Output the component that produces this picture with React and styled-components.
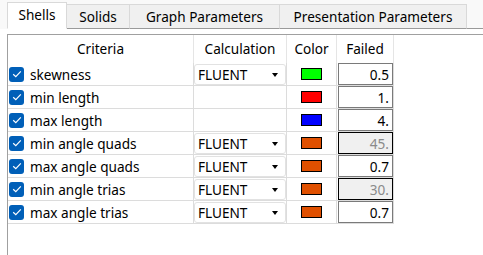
import React from 'react';
import styled, { createGlobalStyle } from 'styled-components';

const GlobalStyle = createGlobalStyle`
  html, body {
    margin: 0;
    padding: 0;
    background: #ffffff;
  }
  body {
    font-family: "Noto Sans", "Liberation Sans", sans-serif;
    font-size: 13.6px;
    color: #000;
  }
`;

const rows = [
  { label: 'skewness', calc: true, color: '#00ff00', value: '0.5' },
  { label: 'min length', calc: false, color: '#ff0000', value: '1.' },
  { label: 'max length', calc: false, color: '#0000ff', value: '4.' },
  { label: 'min angle quads', calc: true, color: '#e05000', value: '45.', disabled: true },
  { label: 'max angle quads', calc: true, color: '#e05000', value: '0.7' },
  { label: 'min angle trias', calc: true, color: '#e05000', value: '30.', disabled: true },
  { label: 'max angle trias', calc: true, color: '#e05000', value: '0.7' },
];

const tabs = [
  { name: 'Shells', width: 60 },
  { name: 'Solids', width: 64 },
  { name: 'Graph Parameters', width: 151 },
  { name: 'Presentation Parameters', width: 188 },
];

const App = () => {
  return (
    <Window>
      <GlobalStyle />
      <TabBar>
        {tabs.map((t, i) => (
          <Tab key={t.name} active={i === 0} width={t.width}>{t.name}</Tab>
        ))}
        <TabFill />
      </TabBar>
      <Pane>
        <Table>
          <HeadCell>Criteria</HeadCell>
          <HeadCell>Calculation</HeadCell>
          <HeadCell>Color</HeadCell>
          <HeadCell>Failed</HeadCell>
          {rows.map((r) => (
            <React.Fragment key={r.label}>
              <NameCell>
                <Check>
                  <svg width="10" height="8" viewBox="0 0 10 8">
                    <path d="M1.2 4.2 L3.8 6.6 L8.8 1.4" fill="none" stroke="#fff" strokeWidth="1.2" />
                  </svg>
                </Check>
                {r.label}
              </NameCell>
              <Cell>
                {r.calc && (
                  <Combo>
                    FLUENT
                    <Arrow />
                  </Combo>
                )}
              </Cell>
              <SwatchCell>
                <Swatch color={r.color} />
              </SwatchCell>
              <Cell>
                <Field disabled={r.disabled}>{r.value}</Field>
              </Cell>
            </React.Fragment>
          ))}
        </Table>
      </Pane>
    </Window>
  );
};

export default App;

const Window = styled.div`
  width: 483px;
  height: 255px;
  overflow: hidden;
  background: #ffffff;
`;

const TabBar = styled.div`
  display: flex;
  align-items: flex-end;
  height: 29px;
  padding-left: 7px;
  background: #f9f9f9;
`;

const Tab = styled.div`
  box-sizing: border-box;
  width: ${(p) => p.width}px;
  height: ${(p) => (p.active ? '27px' : '25px')};
  padding-bottom: ${(p) => (p.active ? '2px' : '0')};
  margin-right: -1px;
  display: flex;
  align-items: center;
  justify-content: center;
  background: ${(p) => (p.active ? '#ffffff' : '#f0f0f0')};
  border: 1px solid #d9d9d9;
  border-bottom: ${(p) => (p.active ? '1px solid #ffffff' : '1px solid #9a9a9a')};
  color: #000;
  white-space: nowrap;
  position: relative;
  z-index: ${(p) => (p.active ? 1 : 0)};
`;

const TabFill = styled.div`
  flex: 1;
  align-self: stretch;
  border-bottom: 1px solid #9a9a9a;
`;

const Pane = styled.div`
  padding: 5px 0 0 7px;
  height: 226px;
  box-sizing: border-box;
`;

const Table = styled.div`
  display: grid;
  grid-template-columns: 186px 93px 50px 57px;
  grid-auto-rows: 23px;
  grid-template-rows: 28px;
  border-left: 1px solid #a0a0a0;
  border-top: 1px solid #a0a0a0;
  height: 220px;
  align-content: start;
`;

const HeadCell = styled.div`
  display: flex;
  align-items: center;
  justify-content: center;
  border-right: 1px solid #e5e5e5;
  padding-bottom: 2px;
  box-sizing: border-box;
`;

const Cell = styled.div`
  display: flex;
  align-items: stretch;
  border-right: 1px solid #dcdcdc;
  border-bottom: 1px solid #dcdcdc;
  box-sizing: border-box;
`;

const NameCell = styled(Cell)`
  align-items: center;
  padding-left: 1px;
  gap: 6px;
`;

const SwatchCell = styled(Cell)`
  align-items: center;
  justify-content: center;
`;

const Check = styled.span`
  width: 15px;
  height: 15px;
  border-radius: 3px;
  background: #005fb8;
  display: inline-flex;
  align-items: center;
  justify-content: center;
  flex-shrink: 0;
`;

const Combo = styled.div`
  flex: 1;
  display: flex;
  align-items: center;
  justify-content: space-between;
  padding: 0 7px 0 3px;
  margin-top: 1px;
  border: 1px solid #e2e2e2;
  border-radius: 3px;
  background: #fff;
  box-sizing: border-box;
`;

const Arrow = styled.span`
  width: 0;
  height: 0;
  border-left: 3.5px solid transparent;
  border-right: 3.5px solid transparent;
  border-top: 4px solid #000;
`;

const Swatch = styled.span`
  width: 19px;
  height: 10px;
  border: 1px solid #000;
  background: ${(p) => p.color};
`;

const Field = styled.div`
  flex: 1;
  display: flex;
  align-items: center;
  justify-content: flex-end;
  padding-right: 3px;
  margin-left: 1px;
  border: 1px solid ${(p) => (p.disabled ? '#000' : '#7a7a7a')};
  background: ${(p) => (p.disabled ? '#f0f0f0' : '#fff')};
  color: ${(p) => (p.disabled ? '#8a8a8a' : '#000')};
  box-sizing: border-box;
`;
